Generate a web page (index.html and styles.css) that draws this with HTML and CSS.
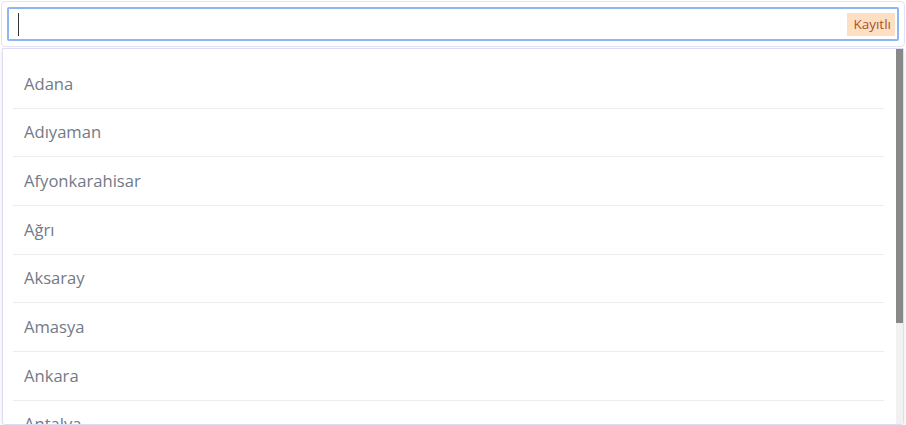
FILE: index.html
```
<!DOCTYPE html>
<html lang="tr">
<head>
<meta charset="utf-8">
<link rel="stylesheet" href="styles.css">
</head>
<body>
<div class="card">
  <div class="input">
    <span class="caret"></span>
    <span class="badge">Kayıtlı</span>
  </div>
</div>
<div class="dropdown">
  <ul class="list">
    <li class="item">Adana</li>
    <li class="item">Adıyaman</li>
    <li class="item">Afyonkarahisar</li>
    <li class="item">Ağrı</li>
    <li class="item">Aksaray</li>
    <li class="item">Amasya</li>
    <li class="item">Ankara</li>
    <li class="item">Antalya</li>
    <li class="item">Ardahan</li>
  </ul>
  <div class="scrollbar"><div class="thumb"></div></div>
</div>
</body>
</html>
```
FILE: styles.css
```
html, body {
  margin: 0;
  padding: 0;
  background: #ffffff;
  overflow: hidden;
}
body {
  font-family: "Open Sans", "Noto Sans", sans-serif;
  width: 906px;
  height: 425px;
}
.card {
  margin: 1px;
  border: 1px solid #e4e4f6;
  border-radius: 4px;
  padding: 5px;
}
.input {
  height: 30px;
  border: 2px solid #8cb7f4;
  border-radius: 2px;
  display: flex;
  align-items: center;
  justify-content: space-between;
}
.caret {
  width: 1px;
  height: 23px;
  background: #333;
  margin-left: 9px;
}
.badge {
  height: 23px;
  line-height: 23px;
  padding: 0 4px 0 6px;
  margin-right: 2px;
  background: #fde0c3;
  color: #a9522b;
  font-size: 13.5px;
}
.dropdown {
  margin: 0 2px;
  height: 375px;
  border: 1px solid #dedcf4;
  border-radius: 0 0 3px 3px;
  box-shadow: 0 2px 4px rgba(60, 60, 120, 0.12);
  display: flex;
  overflow: hidden;
}
.list {
  flex: 1;
  list-style: none;
  margin: 0;
  padding: 11px 12px 0 10px;
  overflow: hidden;
}
.item {
  font-size: 16.6px;
  line-height: 24px;
  padding: 11.83px 11px;
  color: #737a86;
  border-bottom: 1px solid #ececec;
}
.scrollbar {
  width: 7px;
  background: #f1f1f1;
}
.thumb {
  height: 274px;
  background: #888888;
}
```
